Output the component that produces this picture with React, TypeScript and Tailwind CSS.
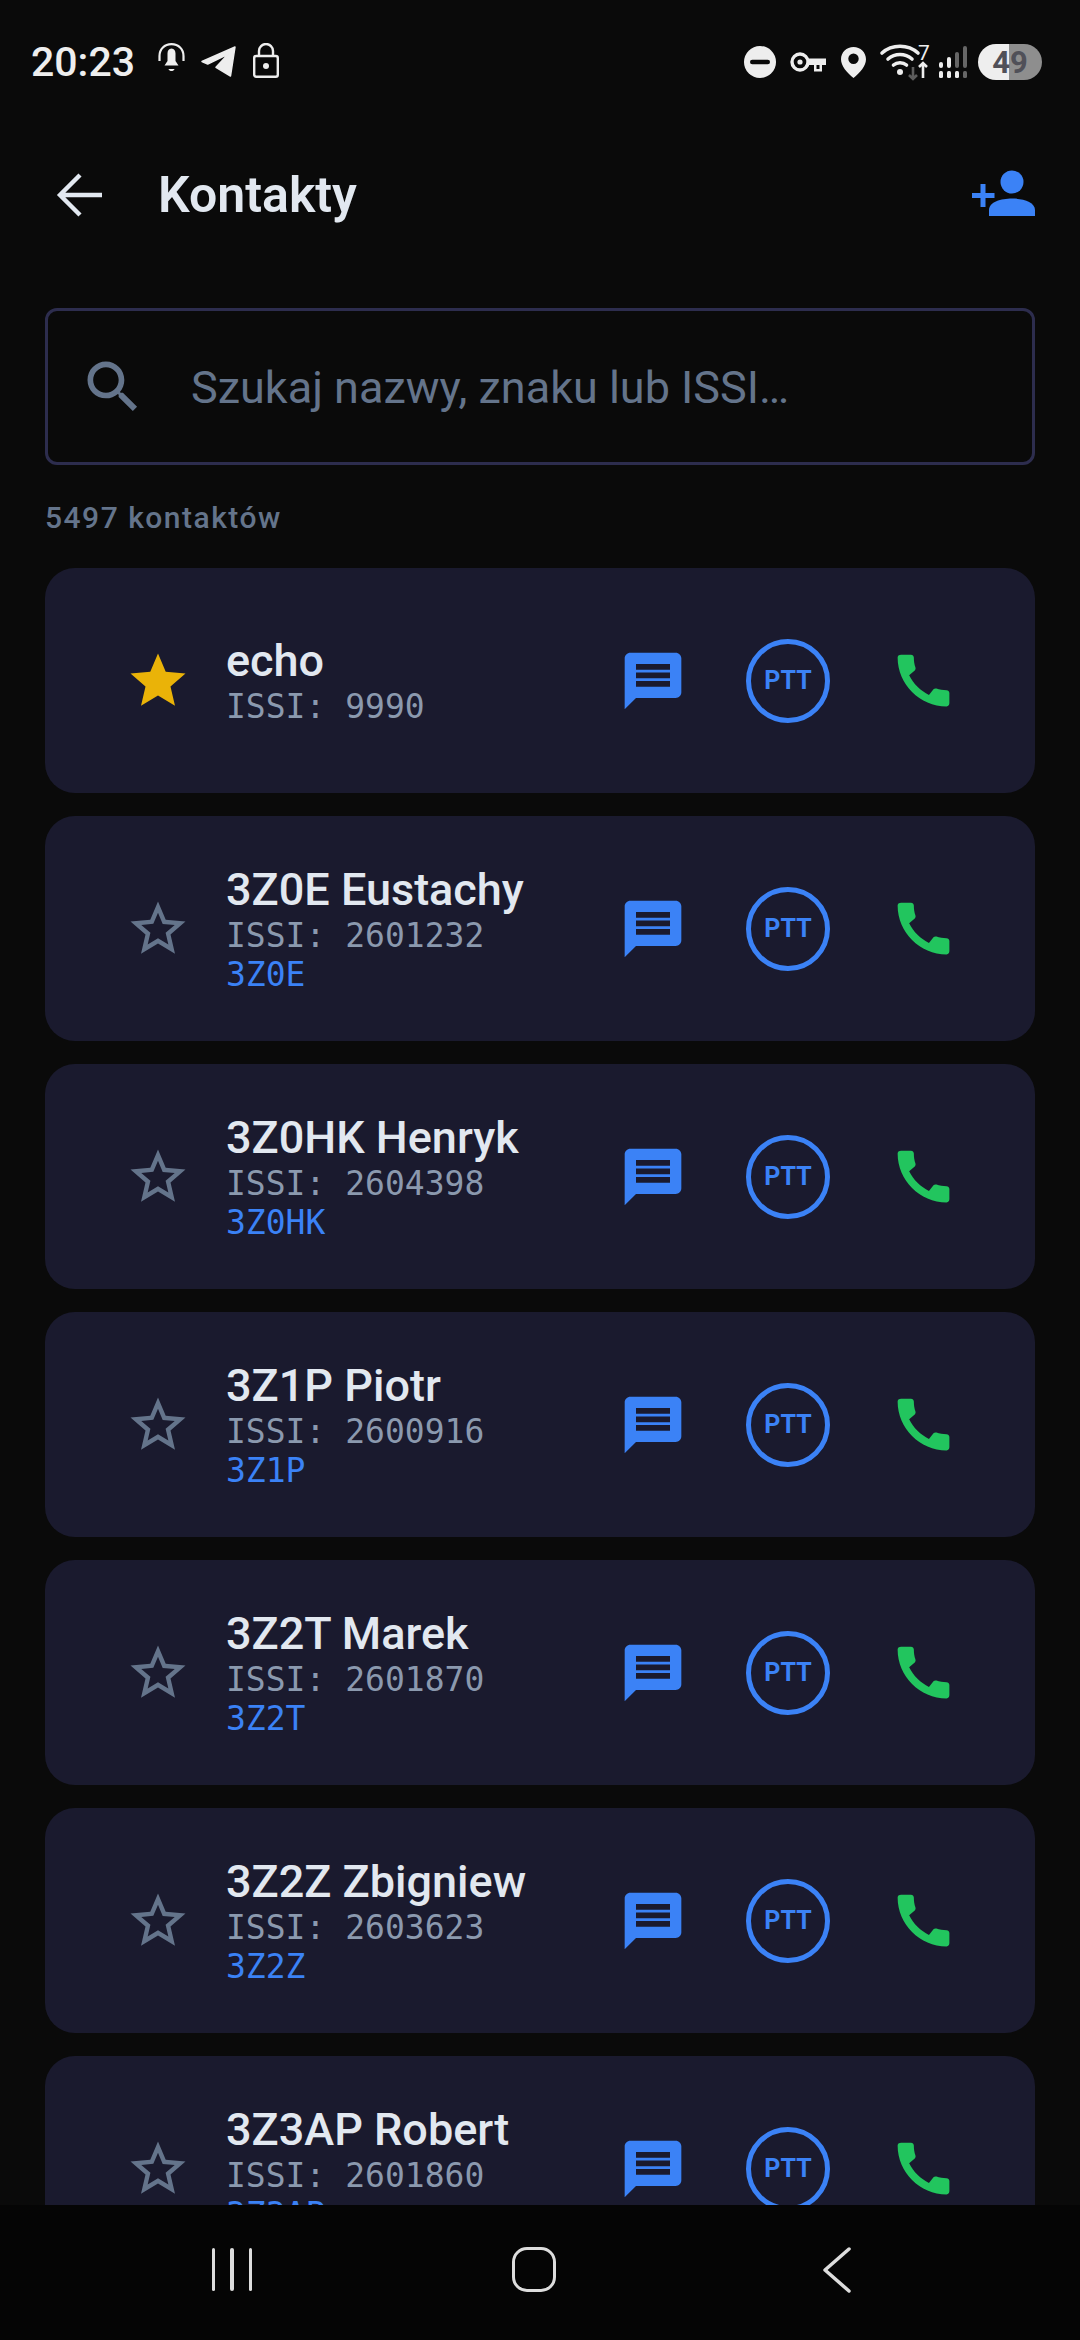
import React from "react";

const BLUE = "#3b82f6";

function Star({ filled }: { filled: boolean }) {
  return (
    <svg width="66" height="66" viewBox="0 0 24 24" fill={filled ? "#eab308" : "#64748b"}>
      {filled ? (
        <path d="M12 17.27 18.18 21l-1.64-7.03L22 9.24l-7.19-.61L12 2 9.19 8.63 2 9.24l5.46 4.73L5.82 21z" />
      ) : (
        <path d="M22 9.24l-7.19-.62L12 2 9.19 8.63 2 9.24l5.46 4.73L5.82 21 12 17.27 18.18 21l-1.63-7.03L22 9.24zM12 15.4l-3.76 2.27 1-4.28-3.32-2.88 4.38-.38L12 6.1l1.71 4.04 4.38.38-3.32 2.88 1 4.28L12 15.4z" />
      )}
    </svg>
  );
}

function Message() {
  return (
    <svg width="68" height="68" viewBox="0 0 24 24" fill={BLUE}>
      <path d="M20 2H4c-1.1 0-1.99.9-1.99 2L2 22l4-4h14c1.1 0 2-.9 2-2V4c0-1.1-.9-2-2-2zm-2 12H6v-2h12v2zm0-3H6V9h12v2zm0-3H6V6h12v2z" />
    </svg>
  );
}

function Phone() {
  return (
    <svg width="69" height="69" viewBox="0 0 24 24" fill="#22c55e">
      <path d="M20.01 15.38c-1.23 0-2.42-.2-3.53-.56-.35-.12-.74-.03-1.01.24l-1.57 1.97c-2.83-1.35-5.48-3.9-6.89-6.83l1.95-1.66c.27-.28.35-.67.24-1.02-.37-1.11-.56-2.3-.56-3.53 0-.54-.45-.99-.99-.99H4.19C3.65 3 3 3.24 3 3.99 3 13.28 10.73 21 20.01 21c.71 0 .99-.63.99-1.18v-3.45c0-.54-.45-.99-.99-.99z" />
    </svg>
  );
}

type Contact = { name: string; issi: string; call?: string; fav?: boolean };

const contacts: Contact[] = [
  { name: "echo", issi: "9990", fav: true },
  { name: "3Z0E Eustachy", issi: "2601232", call: "3Z0E" },
  { name: "3Z0HK Henryk", issi: "2604398", call: "3Z0HK" },
  { name: "3Z1P Piotr", issi: "2600916", call: "3Z1P" },
  { name: "3Z2T Marek", issi: "2601870", call: "3Z2T" },
  { name: "3Z2Z Zbigniew", issi: "2603623", call: "3Z2Z" },
  { name: "3Z3AP Robert", issi: "2601860", call: "3Z3AP" },
];

function Card({ c }: { c: Contact }) {
  return (
    <div className="h-[225px] shrink-0 rounded-[30px] bg-[#1a1a2e] flex items-center pl-[80px] pr-[70px]">
      <div className="w-[66px] flex justify-center shrink-0">
        <Star filled={!!c.fav} />
      </div>
      <div className="ml-[35px] flex-1 min-w-0 flex flex-col font-['DejaVu_Sans_Mono',monospace] text-[33px] leading-[39px]">
        <div className="font-['Roboto',sans-serif] font-medium text-[45px] leading-[52px] text-[#e2e8f0]">{c.name}</div>
        <div className="text-[#8b99ae]">ISSI: {c.issi}</div>
        {c.call && <div className="text-[#3b82f6]">{c.call}</div>}
      </div>
      <div className="flex items-center gap-[51px] shrink-0">
        <div className="w-[84px] flex justify-center"><Message /></div>
        <div className="w-[84px] h-[84px] rounded-full border-[5px] border-[#3b82f6] flex items-center justify-center font-['Roboto',sans-serif] font-bold text-[25px] text-[#3b82f6]">PTT</div>
        <div className="w-[84px] flex justify-center"><Phone /></div>
      </div>
    </div>
  );
}

function StatusLeft() {
  return (
    <div className="flex items-center">
      <span className="font-['Roboto',sans-serif] font-medium text-[41px] leading-none text-[#eeeeee]">20:23</span>
      <svg className="ml-[23px] -mt-[6px]" width="27" height="32" viewBox="0 0 27 32" fill="none">
        <path d="M1.500 18V13C1.500 6 6.500 1.200 13.500 1.200S25.500 6 25.500 13V18" stroke="#eee" strokeWidth="2.200" />
        <path d="M13.500 5.500c-2.700 0-4 2.300-4 5v7.500L6.500 22.500h14l-3-4.500v-7.500c0-2.700-1.300-5-4-5z" fill="#eee" />
        <path d="M10.500 26h6c-.8 2.800-5.200 2.800-6 0z" fill="#eee" />
      </svg>
      <svg className="ml-[16px]" width="35" height="32" viewBox="0 0 35 32" fill="#eee" stroke="#eee" strokeWidth="1.500" strokeLinejoin="round">
        <path d="M1 15.500 L34 1 L29.500 30 L15 21.300 L27.300 8 L6.700 18 Z" />
      </svg>
      <svg className="ml-[17px] -mt-[4px]" width="26" height="35" viewBox="0 0 26 35" fill="none">
        <rect x="1.200" y="13" width="23.600" height="20.800" rx="2" stroke="#eee" strokeWidth="2.400" />
        <path d="M6 13V8a7 7 0 0 1 14 0v5" stroke="#eee" strokeWidth="2.400" />
        <circle cx="13" cy="23" r="3" fill="#eee" />
      </svg>
    </div>
  );
}

function StatusRight() {
  return (
    <div className="flex items-center">
      <svg width="32" height="32" viewBox="0 0 32 32">
        <circle cx="16" cy="16" r="16" fill="#eee" />
        <rect x="6" y="13.700" width="20" height="4.600" rx="2.300" fill="#0a0a0a" />
      </svg>
      <svg className="ml-[14px]" width="37" height="21" viewBox="0 0 37 21" fill="none">
        <circle cx="10" cy="10" r="8" stroke="#eee" strokeWidth="3.400" />
        <circle cx="10" cy="10" r="2.600" fill="#eee" />
        <path d="M17 6.500H36V13H32V19.500H24V13H17Z" fill="#eee" />
        <path d="M26.500 13H29.500V17H26.500Z" fill="#0a0a0a" />
      </svg>
      <svg className="ml-[14px]" width="25" height="31" viewBox="0 0 25 31">
        <path fillRule="evenodd" d="M12.500 0C5.600 0 0 5.400 0 12.200 0 19 6 25.500 12.500 31 19 25.500 25 19 25 12.200 25 5.400 19.400 0 12.500 0zm0 17a5.200 5.200 0 1 1 0-10.400 5.200 5.200 0 0 1 0 10.400z" fill="#eee" />
      </svg>
      <svg className="ml-[14px] overflow-visible" width="49" height="36" viewBox="0 0 49 36" fill="none">
        <path d="M2 9C12 0 28 0 38 9" stroke="#eee" strokeWidth="3.600" strokeLinecap="round" />
        <path d="M8 15C15 9 25 9 32 15" stroke="#eee" strokeWidth="3.600" strokeLinecap="round" />
        <path d="M13.500 21C17 18 23 18 26.500 21" stroke="#eee" strokeWidth="3.600" strokeLinecap="round" />
        <circle cx="20" cy="28" r="3" fill="#eee" />
        <path d="M33 23V35M29 31L33 35L37 31" stroke="#5c5c5c" strokeWidth="2.600" />
        <path d="M43 34V19M39 23L43 19L47 23" stroke="#eee" strokeWidth="2.600" />
        <text x="38" y="16" fontSize="21" fill="#eee" fontFamily="Roboto, sans-serif">7</text>
      </svg>
      <svg className="ml-[10px]" width="30" height="32" viewBox="0 0 30 32">
        <rect x="0" y="16" width="4" height="6" rx="2" fill="#eee" />
        <rect x="0" y="25" width="4" height="7" rx="1.500" fill="#eee" />
        <rect x="8" y="11" width="4" height="11" rx="2" fill="#eee" />
        <rect x="8" y="25" width="4" height="7" rx="1.500" fill="#eee" />
        <rect x="16" y="6" width="4" height="16" rx="2" fill="#666" />
        <rect x="16" y="25" width="4" height="7" rx="1.500" fill="#eee" />
        <rect x="24" y="0" width="4" height="22" rx="2" fill="#666" />
        <rect x="24" y="25" width="4" height="7" rx="1.500" fill="#666" />
      </svg>
      <div className="ml-[9px] w-[64px] h-[36px] rounded-full bg-[linear-gradient(90deg,#eeeeee_48%,#8e8e8e_48%)] flex items-center justify-center font-['Roboto',sans-serif] font-bold text-[31px] leading-none text-[#505058]">49</div>
    </div>
  );
}

export default function App() {
  return (
    <div className="w-[1080px] h-[2340px] bg-[#0a0a0a] flex flex-col overflow-hidden font-['Roboto',sans-serif]">
      <div className="flex-1 min-h-0 overflow-hidden flex flex-col">
        <div className="h-[124px] shrink-0 pl-[31px] pr-[38px] flex items-center justify-between">
          <StatusLeft />
          <StatusRight />
        </div>

        <div className="h-[142px] shrink-0 flex items-center pl-[55px] pr-[45px]">
          <svg width="48" height="48" viewBox="0 0 48 48" fill="none">
            <path d="M47 24H6M25 4L5 24L25 44" stroke="#e2e8f0" strokeWidth="4.400" />
          </svg>
          <h1 className="ml-[55px] flex-1 font-semibold text-[50px] leading-none text-[#e2e8f0]">Kontakty</h1>
          <svg width="64" height="50" viewBox="0 0 64 50" fill={BLUE}>
            <circle cx="41" cy="12" r="11.500" />
            <path d="M18 46v-6c0-8 12-11.500 23-11.500S64 32 64 40v6z" />
            <path d="M9.500 14h5v9h9v5h-9v9h-5v-9H1v-5h8.500z" />
          </svg>
        </div>

        <div className="mx-[45px] mt-[42px] h-[157px] shrink-0 rounded-[12px] border-[3px] border-[#2d2d4e] flex items-center pl-[31px]">
          <svg width="68" height="68" viewBox="0 0 24 24" fill="#64748b" className="shrink-0">
            <path d="M15.500 14h-.79l-.28-.27C15.410 12.590 16 11.110 16 9.500 16 5.910 13.090 3 9.500 3S3 5.910 3 9.500 5.910 16 9.500 16c1.610 0 3.090-.59 4.230-1.570l.27.28v.79l5 4.990L20.490 19l-4.990-5zm-6 0C7.010 14 5 11.990 5 9.500S7.010 5 9.500 5 14 7.010 14 9.500 11.990 14 9.500 14z" />
          </svg>
          <span className="ml-[44px] mt-[2px] text-[45px] leading-none text-[#64748b]">Szukaj nazwy, znaku lub ISSI…</span>
        </div>

        <div className="ml-[45px] mt-[36px] h-[34px] shrink-0 font-medium text-[30px] leading-[34px] tracking-[1.500px] text-[#64748b]">5497 kontaktów</div>

        <div className="mt-[33px] mx-[45px] flex flex-col gap-[23px]">
          {contacts.map((c) => (
            <Card key={c.name} c={c} />
          ))}
        </div>
      </div>

      <div className="h-[135px] shrink-0 bg-[#050505] grid grid-cols-3 pl-[81px] pr-[92px] pb-[6px] items-center justify-items-center">
        <div className="flex gap-[15px]">
          <div className="w-[3.500px] h-[43px] rounded-full bg-[#dddddd]" />
          <div className="w-[3.500px] h-[43px] rounded-full bg-[#dddddd]" />
          <div className="w-[3.500px] h-[43px] rounded-full bg-[#dddddd]" />
        </div>
        <div className="w-[44px] h-[45px] rounded-[15px] border-[3.500px] border-[#dddddd]" />
        <svg width="30" height="46" viewBox="0 0 30 46" fill="none">
          <path d="M27 2L3 23L27 44" stroke="#dddddd" strokeWidth="3.500" strokeLinecap="round" strokeLinejoin="round" />
        </svg>
      </div>
    </div>
  );
}
